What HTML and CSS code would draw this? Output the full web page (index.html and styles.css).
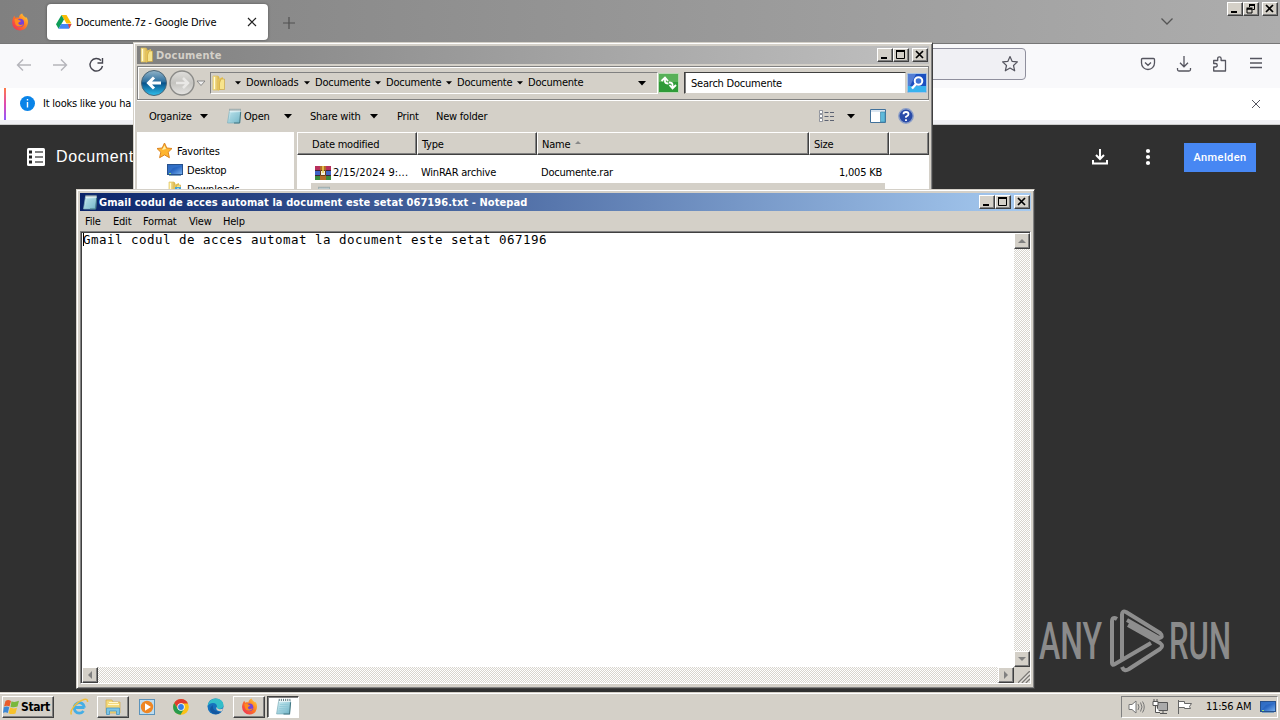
FILE: index.html
```html
<!DOCTYPE html>
<html lang="en">
<head>
<meta charset="UTF-8" />
<meta name="viewport" content="width=device-width, initial-scale=1" />
<title>Desktop</title>
<link rel="stylesheet" href="styles.css">
</head>
<body>
<svg width="0" height="0" class="defs">
  <defs>
    <linearGradient id="fox" x1="1" y1="0" x2="0" y2="1"><stop offset="0" stop-color="#ffdf3a"/><stop offset=".45" stop-color="#ff7a22"/><stop offset="1" stop-color="#ed2360"/></linearGradient>
    <linearGradient id="folder"><stop offset="0" stop-color="#fff3a8"/><stop offset="1" stop-color="#d8b04a"/></linearGradient>
    <linearGradient id="blueball" x1="0" y1="0" x2="0" y2="1"><stop offset="0" stop-color="#93b4c8"/><stop offset=".45" stop-color="#2c6f9f"/><stop offset=".5" stop-color="#07518a"/><stop offset="1" stop-color="#2fc0ed"/></linearGradient>
    <linearGradient id="grayball" x1="0" y1="0" x2="0" y2="1"><stop offset="0" stop-color="#e0dfdc"/><stop offset=".5" stop-color="#c4c3bf"/><stop offset="1" stop-color="#e6e5e3"/></linearGradient>
    <linearGradient id="pad" x1="0" y1="0" x2="1" y2="1"><stop offset="0" stop-color="#d9f3f8"/><stop offset="1" stop-color="#6bb1c4"/></linearGradient>
    <linearGradient id="scr" x1="0" y1="0" x2="1" y2="1"><stop offset="0" stop-color="#1d4fa3"/><stop offset=".5" stop-color="#2b69c4"/><stop offset="1" stop-color="#7db4ee"/></linearGradient>
  </defs>
  <symbol id="i-fox" viewBox="0 0 16 16">
    <path d="M8 15.500A7 7 0 0 1 1 8.500C1 6 2 4 3 2.500L4 4.500C5 4 6 4 7 4.300C7 2.500 8.500 1 10 .5C10.500 2.500 12 3 13 4L14 4C15 6 15.500 8 14.700 10.500A7 7 0 0 1 8 15.500z" fill="url(#fox)"/>
    <circle cx="8" cy="8.800" r="3.600" fill="#7543d9"/>
    <path d="M3 5.500C5 5 6.500 5.500 7.500 6.500L9 7C8 8 6.500 7.800 6.500 9.200C7 11 9.500 11 11 9.500C10 13 4.500 13 3.700 9z" fill="#ff8a1f"/>
  </symbol>
  <symbol id="i-folder" viewBox="0 0 16 16">
    <path d="M2 1h5l1 1v13H2z" fill="url(#folder)" stroke="#d9b951" stroke-width=".6"/>
    <path d="M7 4l5-2v12l-5 1.500z" fill="#e6c458"/>
    <path d="M10 4h3.500v10.500H8.500V8z" fill="#f7e48c" stroke="#c69f3a" stroke-width=".6"/>
    <path d="M3.500 2v12" stroke="#fffbd8"/>
  </symbol>
  <symbol id="i-pad" viewBox="0 0 16 16">
    <path d="M3.500 2.500h11l-1 12.500H1.500z" fill="url(#pad)" stroke="#7fb0bc" stroke-width=".7"/>
    <path d="M3.500 2.500h11" stroke="#f7fbfc" stroke-width="2"/>
    <path d="M4 .8v2M6 .8v2M8 .8v2M10 .8v2M12 .8v2M14 .8v2" stroke="#56747b" stroke-width=".9"/>
    <path d="M4.500 6h8M4.200 8h8M4 10h8M3.500 12h8" stroke="#8bc6d5" stroke-width=".7"/>
    <path d="M14.700 4l-1 11H8" fill="none" stroke="#407783"/>
  </symbol>
  <symbol id="i-screen" viewBox="0 0 16 14">
    <rect x=".5" y="1.500" width="15" height="10" fill="url(#scr)" stroke="#27518c"/>
    <path d="M1 10.500L6 5l9-2.500V2H1z" fill="#3d7ed4" opacity=".55"/>
    <path d="M2 12.500h12" stroke="#7ea0bd"/>
    <path d="M2 10.500h2" stroke="#9be26e"/>
  </symbol>
  <symbol id="i-down" viewBox="0 0 8 5"><path d="M0 0h8L4 4.500z"/></symbol>
  <symbol id="i-min" viewBox="0 0 12 10"><path d="M2 8h6" stroke="#000" stroke-width="2"/></symbol>
  <symbol id="i-max" viewBox="0 0 12 10"><path d="M1.500 1v7.500h8V1M1 1h9" fill="none" stroke="#000"/><path d="M1 1h9" stroke="#000" stroke-width="2"/></symbol>
  <symbol id="i-x" viewBox="0 0 12 10"><path d="M2 1l7 7M9 1L2 8" stroke="#000" stroke-width="1.700"/></symbol>
</svg>

<!-- Browser -->
<div class="browser">
  <div class="tabstrip">
    <svg class="fox" width="18" height="18"><use href="#i-fox"/></svg>
    <div class="tab">
      <svg width="16" height="14" viewBox="0 0 16 14">
        <path d="M5.500 0h5l5 8.500h-5z" fill="#fbbc04"/><path d="M5.500 0L0 9.300 2.600 13.700 8 4.500z" fill="#0f9d58"/><path d="M5.200 9h10.300l-2.500 4.700H2.600z" fill="#4285f4"/><path d="M12 9h3.500l-2.200 4.500z" fill="#ea4335"/>
      </svg>
      <span class="tab-title">Documente.7z - Google Drive</span>
      <svg width="10" height="10" viewBox="0 0 10 10"><path d="M1 1l8 8M9 1L1 9" stroke="#222" stroke-width="1.200"/></svg>
    </div>
    <svg class="plus" width="12" height="12" viewBox="0 0 12 12"><path d="M6 0v12M0 6h12" stroke="#505050" stroke-width="1.200"/></svg>
    <svg class="chev" width="14" height="9" viewBox="0 0 14 9"><path d="M1.500 1.500L7 7l5.500-5.500" fill="none" stroke="#555" stroke-width="1.300"/></svg>
    <div class="winbtns">
      <span class="btn3"><svg width="12" height="10"><use href="#i-min"/></svg></span>
      <span class="btn3"><svg width="12" height="10" viewBox="0 0 12 10"><path d="M4.500 3V1h5v4.500h-2M2 5h5v4H2z" fill="none" stroke="#000"/><path d="M4 1h6M1.500 4.500h6" stroke="#000" stroke-width="1.800"/></svg></span>
      <span class="btn3 gap"><svg width="12" height="10"><use href="#i-x"/></svg></span>
    </div>
  </div>
  <div class="navbar">
    <svg class="nav-arrows" width="90" height="20" viewBox="0 0 90 20" fill="none" stroke-width="1.400">
      <path d="M15 10H1.500M7 4.500L1.500 10 7 15.500M37 10h13.500M45 4.500l5.500 5.500-5.500 5.500" stroke="#b5b5bb"/>
      <path d="M85 5.500A6.300 6.300 0 1 0 86.500 11M86.500 3v5H81.500" stroke="#45454f"/>
    </svg>
    <div class="urlbar">
      <svg width="18" height="18" viewBox="0 0 18 18"><path d="M9 1.500l2.200 4.900 5.200.5-3.900 3.600 1.200 5.300L9 13.100l-4.700 2.700 1.200-5.300L1.600 6.900l5.200-.5z" fill="none" stroke="#55555f" stroke-width="1.200" stroke-linejoin="round"/></svg>
    </div>
    <div class="nav-icons">
      <svg width="16" height="16" viewBox="0 0 16 16" fill="none" stroke="#55555f" stroke-width="1.300"><path d="M2.500 2.500h11a1 1 0 0 1 1 1V7a6.500 6.500 0 0 1-13 0V3.500a1 1 0 0 1 1-1zM5 6.500l3 2.800 3-2.800"/></svg>
      <svg width="16" height="16" viewBox="0 0 16 16" fill="none" stroke="#55555f" stroke-width="1.300"><path d="M8 0v10.500M4 6.800l4 4 4-4M1.500 12v1.500a1.500 1.500 0 0 0 1.500 1.500h10a1.500 1.500 0 0 0 1.500-1.500V12"/></svg>
      <svg width="16" height="16" viewBox="0 0 16 16" fill="none" stroke="#55555f" stroke-width="1.300"><path d="M1.700 7.500V4.500h4V2.500a1.700 1.700 0 0 1 3.400 0v2h4.400V15H1.700v-4h1.800a1.700 1.700 0 0 0 0-3.500z" stroke-linejoin="round"/></svg>
      <svg width="16" height="16" viewBox="0 0 16 16" stroke="#55555f" stroke-width="1.300"><path d="M2 2.500h12M2 7h12M2 11.500h12"/></svg>
    </div>
  </div>
  <div class="notice">
    <svg width="15" height="15" viewBox="0 0 15 15"><circle cx="7.500" cy="7.500" r="7.500" fill="#0a84e8"/><path d="M7.500 3v1.600M7.500 6v5.500" stroke="#fff" stroke-width="1.400"/></svg>
    <span class="notice-text">It looks like you ha</span>
    <svg width="10" height="10" viewBox="0 0 10 10"><path d="M1 1l8 8M9 1L1 9" stroke="#55555f"/></svg>
  </div>
  <div class="drive">
    <svg width="18" height="18" viewBox="0 0 18 18"><rect width="18" height="18" rx="1.500" fill="#fff"/><path d="M2 4h3M2 9h3M2 14h3" stroke="#222" stroke-width="3"/><path d="M8 4h8M8 9h8M8 14h8" stroke="#555" stroke-width="1.400"/></svg>
    <span class="drive-title">Document</span>
    <svg class="dl" width="16" height="16" viewBox="0 0 16 16" fill="none" stroke="#fff" stroke-width="2"><path d="M8 0v9.500M4 6l4 4 4-4M1 11v3.500h14V11"/></svg>
    <svg width="6" height="18" viewBox="0 0 6 18" fill="#fff"><circle cx="3" cy="3" r="2.100"/><circle cx="3" cy="9" r="2.100"/><circle cx="3" cy="15" r="2.100"/></svg>
    <span class="signin">Anmelden</span>
  </div>
</div>

<!-- Watermark -->
<svg class="anyrun" width="210" height="70" viewBox="0 0 210 70">
  <g class="anyrun-text">
    <text x="1" y="51" textLength="63" lengthAdjust="spacingAndGlyphs">ANY</text>
    <text x="131" y="51" textLength="62" lengthAdjust="spacingAndGlyphs">RUN</text>
  </g>
  <path d="M84 53V6.500Q84 2.500 88 4L122 25Q126 29 121 30L89 12M79 11Q74 8 74 14V55Q74 58 77 56L113 35M84 59Q86 64 91 61L122 41Q126 38 122 35L90 17" fill="none" stroke="#8e8e8e" stroke-width="4" stroke-linejoin="round"/>
</svg>

<!-- Explorer -->
<div class="window explorer">
  <div class="titlebar inactive">
    <svg width="16" height="16"><use href="#i-folder"/></svg>
    <span class="title">Documente</span>
    <div class="winbtns">
      <span class="btn3"><svg width="12" height="10"><use href="#i-min"/></svg></span>
      <span class="btn3"><svg width="12" height="10"><use href="#i-max"/></svg></span>
      <span class="btn3 gap"><svg width="12" height="10"><use href="#i-x"/></svg></span>
    </div>
  </div>
  <div class="addressrow">
    <svg class="balls" width="68" height="28" viewBox="0 0 68 28">
      <circle cx="15" cy="14" r="12.500" fill="url(#blueball)" stroke="#4a6475"/>
      <path d="M22 14H10M15 8.500L9.500 14l5.500 5.500" fill="none" stroke="#fff" stroke-width="3"/>
      <circle cx="43" cy="14" r="12" fill="url(#grayball)" stroke="#8b8b88" stroke-width="1.400"/>
      <path d="M37 14h11M44 9l5 5-5 5" fill="none" stroke="#e9e8e6" stroke-width="2.500"/>
      <path d="M58 12h8l-4 4.500z" fill="#eee" stroke="#777" stroke-width=".8"/>
    </svg>
    <div class="address">
      <svg width="16" height="16"><use href="#i-folder"/></svg>
      <svg class="sep first" width="6" height="4"><use href="#i-down"/></svg>
      <span class="crumb downloads">Downloads</span>
      <svg class="sep" width="6" height="4"><use href="#i-down"/></svg>
      <span class="crumb">Documente</span>
      <svg class="sep" width="6" height="4"><use href="#i-down"/></svg>
      <span class="crumb">Documente</span>
      <svg class="sep" width="6" height="4"><use href="#i-down"/></svg>
      <span class="crumb">Documente</span>
      <svg class="sep" width="6" height="4"><use href="#i-down"/></svg>
      <span class="crumb">Documente</span>
      <svg class="address-drop" width="8" height="5"><use href="#i-down"/></svg>
    </div>
    <svg class="refresh" width="21" height="20" viewBox="0 0 21 20"><rect x=".5" y=".5" width="20" height="19" fill="#2f9b38" stroke="#b9d9b4"/><path d="M1 1h19v8H1z" fill="#6ab967" opacity=".7"/><path d="M7 5.500v3q0 2 3.500 2M3.500 8L7 4.500 10 8M14.500 14.500v-3q0-2-3.500-2M11.500 12l3 3.500 3.500-3.500" fill="none" stroke="#fff" stroke-width="1.800"/></svg>
    <div class="search">Search Documente</div>
    <svg width="20" height="20" viewBox="0 0 20 20"><rect x=".5" y=".5" width="19" height="19" rx="1" fill="#1b4fc0" stroke="#a6c4e4"/><path d="M1 13h18v6H1z" fill="#37b2ee"/><path d="M1 1h8L3 13H1z" fill="#6b92dd" opacity=".7"/><circle cx="11.500" cy="8" r="3.800" fill="#3d72d2" stroke="#fff" stroke-width="2"/><path d="M9 11l-4 4.500" stroke="#fff" stroke-width="2.400"/></svg>
  </div>
  <div class="commands">
    <span class="c-organize">Organize</span>
    <svg width="8" height="5"><use href="#i-down"/></svg>
    <svg class="c-pad" width="16" height="16"><use href="#i-pad"/></svg>
    <span class="c-open">Open</span>
    <svg width="8" height="5"><use href="#i-down"/></svg>
    <span class="c-share">Share with</span>
    <svg width="8" height="5"><use href="#i-down"/></svg>
    <span class="c-print">Print</span>
    <span class="c-new">New folder</span>
    <div class="views">
      <svg width="16" height="13" viewBox="0 0 16 13"><path d="M.5.5h3v3h-3zM.5 4.500h3v3h-3zM.5 8.500h3v3h-3z" fill="#fff" stroke="#7a7f8c" stroke-width=".8"/><path d="M5.500 2.500h4M11 2.500h4M5.500 6.500h4M11 6.500h4M5.500 10.500h4M11 10.500h4" stroke="#5c6272"/></svg>
      <svg width="8" height="5"><use href="#i-down"/></svg>
      <svg class="pane" width="16" height="14" viewBox="0 0 16 14"><path d="M.5.500h15v13H.5z" fill="#fff" stroke="#41719b"/><path d="M1 2h14" stroke="#b6cbe0"/><path d="M10.500 3h4.500v10h-4.500z" fill="#5eb9da" stroke="#418aaa" stroke-width=".7"/></svg>
      <svg width="16" height="16" viewBox="0 0 16 16"><circle cx="8" cy="8" r="7.200" fill="#294ba8" stroke="#8c9fc8" stroke-width="1.400"/><path d="M5.500 6.300Q5.500 4 8 4t2.500 2.200Q10.500 7.500 8 8.800v1M8 11.200v1.700" fill="none" stroke="#fff" stroke-width="1.800"/></svg>
    </div>
  </div>
  <div class="panes">
    <div class="sidebar">
      <div class="side-item top"><svg width="17" height="17" viewBox="0 0 17 17"><path d="M8.500 1l2.300 5 5.200.5-3.800 3.700 1.200 5.500-4.900-2.800-4.900 2.800 1.200-5.500L1 6.500 6.200 6z" fill="#ffb52e" stroke="#dc8421"/><path d="M8.500 3.500l1.500 3.500-4 1z" fill="#fff0a8"/></svg><span>Favorites</span></div>
      <div class="side-item sub"><svg width="16" height="14"><use href="#i-screen"/></svg><span>Desktop</span></div>
      <div class="side-item sub"><svg width="16" height="16" viewBox="0 0 16 16"><use href="#i-folder"/><path d="M8 6h6v7H8z" fill="#4aa3d2"/><path d="M11 7v4M9 9.500l2 2 2-2" stroke="#fff" fill="none"/></svg><span>Downloads</span></div>
    </div>
    <div class="filelist">
      <div class="header">
        <span class="h-date">Date modified</span><span class="h-type">Type</span><span class="h-name">Name <i class="sort"></i></span><span class="h-size">Size</span><span class="h-rest"></span>
      </div>
      <div class="file">
        <svg width="16" height="16" viewBox="0 0 16 16"><path d="M0 1h16v5H0z" fill="#b8305c"/><path d="M0 6h16v5H0z" fill="#3f65c8"/><path d="M0 11h16v4H0z" fill="#3a8b3c"/><path d="M0 5.500h16M0 10.500h16" stroke="#412233"/><path d="M5 1h6v14H5z" fill="#b46b28"/><path d="M5.500 5.500h5v5h-5z" fill="#f5efdc" stroke="#6b3f19"/><path d="M8 1v7" stroke="#eed34e" stroke-width="1.500"/></svg>
        <span class="f-date">2/15/2024 9:...</span><span class="f-type">WinRAR archive</span><span class="f-name">Documente.rar</span><span class="f-size">1,005 KB</span>
      </div>
      <div class="file selected"><svg width="16" height="16"><use href="#i-pad"/></svg></div>
    </div>
  </div>
</div>

<!-- Notepad -->
<div class="window notepad">
  <div class="titlebar active">
    <svg width="16" height="16"><use href="#i-pad"/></svg>
    <span class="title">Gmail codul de acces automat la document este setat 067196.txt - Notepad</span>
    <div class="winbtns">
      <span class="btn3"><svg width="12" height="10"><use href="#i-min"/></svg></span>
      <span class="btn3"><svg width="12" height="10"><use href="#i-max"/></svg></span>
      <span class="btn3 gap"><svg width="12" height="10"><use href="#i-x"/></svg></span>
    </div>
  </div>
  <div class="menu"><span class="m-file">File</span><span class="m-edit">Edit</span><span class="m-format">Format</span><span class="m-view">View</span><span>Help</span></div>
  <div class="editor">
    <div class="text">Gmail codul de acces automat la document este setat 067196</div>
    <div class="vscroll"><span class="btn3"><i class="up"></i></span><span class="btn3"><i class="dn"></i></span></div>
    <div class="hscroll"><span class="btn3"><i class="lt"></i></span><span class="btn3"><i class="rt"></i></span></div>
    <div class="grip"><svg width="12" height="12" viewBox="0 0 12 12"><path d="M0 12L12 0M4 12l8-8M8 12l4-4" stroke="#7c7a76" stroke-width="1.500"/><path d="M1.500 12L12 1.500M5.500 12L12 5.500M9.500 12L12 9.500" stroke="#fff" stroke-width=".7"/></svg></div>
  </div>
</div>

<!-- Taskbar -->
<div class="taskbar">
  <div class="start">
    <svg width="17" height="16" viewBox="0 0 17 16"><path d="M2.500 2Q5 0 8 2L6.500 7.500Q4 6 1 7.500z" fill="#e95b2b"/><path d="M8.500 2.300q3 1.500 7.500-.5L14.500 7.500q-4 1.500-7 .2z" fill="#79b83c"/><path d="M.8 8.300Q4 6.800 6.200 8.300L4.800 14Q2 12.500 0 14z" fill="#3d88d5"/><path d="M7.200 8.600q3 1.500 6.800.2L12.500 14.500q-4 1.300-7-.3z" fill="#f6c22d"/></svg>
    <span>Start</span>
  </div>
  <div class="task ie"><svg width="19" height="18" viewBox="0 0 19 18"><path d="M14.500 9.500H5.200M14.500 9.500A5.200 5.200 0 1 0 13.500 13" fill="none" stroke="#45aee5" stroke-width="2.800"/><path d="M1.500 16.500C-1 13 6 4 14 1.500Q18 .5 17.500 4" fill="none" stroke="#f0bd39" stroke-width="1.500"/></svg></div>
  <div class="task raised"><svg width="18" height="18" viewBox="0 0 18 18"><path d="M2 2h6l1 2h7v11H2z" fill="#f3d97b" stroke="#d1ab48" stroke-width=".7"/><path d="M5 4.500h9M4 6.500h11" stroke="#fff8d0"/><path d="M2.500 16.500V10h13v6.500h-3V13h-7v3.500z" fill="#7bc5e6" stroke="#4795c3" stroke-width=".8"/></svg></div>
  <div class="task"><svg width="16" height="16" viewBox="0 0 16 16"><rect x=".5" y=".5" width="15" height="15" fill="#bddcf0" stroke="#5b93bb"/><circle cx="8" cy="8" r="6.200" fill="#ef8623"/><path d="M6 4.300v7.400L12 8z" fill="#fff"/></svg></div>
  <div class="task"><svg width="16" height="16" viewBox="0 0 16 16"><circle cx="8" cy="8" r="7.800" fill="#fbc116"/><path d="M1.200 4A7.800 7.800 0 0 1 15 4.500H8L5 9.500z" fill="#df3b2f"/><path d="M1.200 4A7.800 7.800 0 0 0 7.500 15.800L11 10H5z" fill="#279b4d"/><circle cx="8" cy="8" r="3.700" fill="#fff"/><circle cx="8" cy="8" r="2.900" fill="#357fe5"/></svg></div>
  <div class="task"><svg width="17" height="17" viewBox="0 0 17 17"><circle cx="8.500" cy="8.500" r="8" fill="#1671bd"/><path d="M.6 8Q2 .5 9 .5 16 1 16.500 7q0 4-5 4-2.500-.3-1.500-2Q10 5 6 5 2.500 5 .6 8z" fill="#32bdc9"/><path d="M9.500 9Q8 13 14.500 13.500 16 12 16 10.500 11 12.500 9.500 9z" fill="#d4d0c8"/><path d="M6 7Q4.500 13 13.500 14.500 9 18 4.500 14.500 1 10 6 7z" fill="#1457a0"/></svg></div>
  <div class="task raised"><svg width="17" height="17"><use href="#i-fox"/></svg></div>
  <div class="task pressed"><svg width="17" height="17"><use href="#i-pad"/></svg></div>
  <div class="tray">
    <svg width="17" height="16" viewBox="0 0 17 16" fill="none" stroke="#777"><path d="M1 5.500h3L8 2v12l-4-3.500H1z" fill="#fff"/><path d="M10 5q2 3 0 6M12.500 3.500q3 4.500 0 9M14.500 2.500q3.500 5.500 0 11"/></svg>
    <svg width="17" height="16" viewBox="0 0 17 16" fill="none" stroke="#555"><path d="M5.500 3.500h10v8h-10zM8 14.500h7M11 12v2" fill="#aaa"/><path d="M1 2.500h5v4H1zM2 0v2M5 0v2M3.500 7v6.500H8" fill="#fff"/></svg>
    <svg width="17" height="16" viewBox="0 0 17 16" fill="#fff" stroke="#666"><path d="M2.500 1v14M2.500 2.500h6v2h7l-2 3 1 2h-6v-1h-6z"/></svg>
    <span class="clock">11:56 AM</span>
    <svg width="16" height="14"><use href="#i-screen"/></svg>
  </div>
</div>
</body>
</html>
```

FILE: styles.css
```css
* {
  box-sizing: border-box;
}
body {
  margin: 0;
  width: 1280px;
  height: 720px;
  overflow: hidden;
  position: relative;
  background: #303030;
  font-family: "DejaVu Sans Condensed", "DejaVu Sans", sans-serif;
  font-stretch: condensed;
  font-size: 11px;
  letter-spacing: -0.22px;
  line-height: 14px;
  color: #000;
  white-space: nowrap;
}
svg {
  display: block;
  flex: none;
}
.defs {
  position: absolute;
}

/* classic 3d button */
.btn3 {
  width: 16px;
  height: 14px;
  background: #d4d0c8;
  border: 1px solid;
  border-color: #fff #404040 #404040 #fff;
  box-shadow: inset -1px -1px #808080;
  display: flex;
  align-items: center;
  justify-content: center;
  flex: none;
}
.btn3.gap {
  margin-left: 3px;
}
.winbtns {
  display: flex;
  margin-left: auto;
}

/* browser */
.tabstrip {
  height: 44px;
  display: flex;
  align-items: flex-start;
  background: linear-gradient(90deg, #808080, #adadad);
  border-bottom: 1px solid #777;
}
.fox {
  margin: 13px 0 0 11px;
}
.tab {
  width: 221px;
  height: 36px;
  margin: 4px 0 0 18px;
  padding: 0 11px 0 9px;
  display: flex;
  align-items: center;
  background: #fff;
  border-radius: 4px;
  box-shadow: 0 0 3px rgba(0,0,0,0.4);
}
.tab-title {
  margin-left: 4px;
  padding-top: 2px;
  flex: 1;
}
.plus {
  margin: 17px 0 0 15px;
}
.chev {
  margin: 17px 0 0 865px;
}
.tabstrip .winbtns {
  margin-top: 2px;
  margin-right: 2px;
}
.navbar {
  height: 44px;
  display: flex;
  align-items: center;
  background: #f9f9fb;
}
.nav-arrows {
  margin-left: 16px;
  margin-top: -2px;
}
.urlbar {
  width: 886px;
  height: 32px;
  margin-left: 34px;
  margin-top: -4px;
  padding-right: 6px;
  display: flex;
  align-items: center;
  justify-content: flex-end;
  background: #f0f0f4;
  border: 1px solid #8f8f9d;
  border-radius: 4px;
}
.nav-icons {
  display: flex;
  gap: 20px;
  margin-left: 114px;
  margin-top: -4px;
}
.notice {
  height: 37px;
  display: flex;
  align-items: center;
  padding: 0 19px 5px 20px;
  background: linear-gradient(#ff7a45, #e04ab0, #9059ff) 4px 0 / 2px 32px no-repeat, #fff;
  border-bottom: 1px solid #ccc;
  box-shadow: inset 0 -4px #f0f0f4;
}
.notice-text {
  margin-left: 8px;
  flex: 1;
}
.drive {
  height: 64px;
  padding: 0 24px 0 27px;
  display: flex;
  align-items: center;
}
.drive-title {
  margin-left: 11px;
  width: 90px;
  font: 16px "Liberation Sans", sans-serif;
  letter-spacing: 0.6px;
  color: #fff;
}
.dl {
  margin-left: auto;
}
.dl + svg {
  margin: 0 33px 0 37px;
}
.signin {
  width: 72px;
  height: 29px;
  background: #4787f3;
  color: #fff;
  font: 500 11px/29px "Roboto", sans-serif;
  letter-spacing: 0.4px;
  text-align: center;
}

.anyrun {
  position: absolute;
  left: 1038px;
  top: 608px;
}
.anyrun-text {
  font: 500 51px "Roboto", sans-serif;
  letter-spacing: 0;
  fill: #8b8b8b;
}

/* windows */
.window {
  position: absolute;
  background: #d4d0c8;
  border: 1px solid;
  border-color: #d4d0c8 #404040 #404040 #d4d0c8;
  box-shadow: inset 1px 1px #fff, inset -1px -1px #808080;
  padding: 3px;
}
.titlebar {
  height: 18px;
  padding: 0 1px 0 2px;
  display: flex;
  align-items: center;
  font-weight: bold;
  letter-spacing: 0.08px;
}
.titlebar .title {
  margin-left: 1px;
  padding-top: 1px;
}
.inactive {
  background: linear-gradient(90deg, #808080, #c0c0c0);
  color: #d4d0c8;
}
.inactive .title {
  letter-spacing: 0.25px;
}
.active {
  background: linear-gradient(90deg, #0a246a, #a6caf0);
  color: #fff;
}

.explorer {
  left: 133px;
  top: 42px;
  width: 800px;
  height: 160px;
}
.addressrow {
  height: 34px;
  margin-top: 2px;
  display: flex;
  align-items: center;
  padding-left: 1px;
  border: 1px solid #808080;
  box-shadow: inset 1px 1px #fff, 0 1px #fff;
}
.address {
  width: 448px;
  height: 22px;
  margin-left: 3px;
  display: flex;
  align-items: center;
  border: 1px solid;
  border-color: #808080 #fff #fff #808080;
}
.sep.first {
  margin-left: 8px;
}
.sep {
  margin-right: 5px;
}
.crumb {
  width: 60px;
}
.crumb.downloads {
  width: 58px;
}
.address-drop {
  margin-left: auto;
  margin-right: 11px;
}
.search {
  width: 222px;
  height: 22px;
  margin: 0 1px 0 5px;
  padding: 4px 6px;
  background: #fff;
  border: 1px solid;
  border-color: #404040 #d4d0c8 #d4d0c8 #404040;
  box-shadow: inset 1px 0 #808080;
}
.commands {
  height: 32px;
  display: flex;
  align-items: center;
  padding-left: 12px;
}
.commands span {
  padding-top: 1px;
}
.c-organize {
  width: 51px;
}
.c-pad {
  margin: 0 2px 0 18px;
}
.c-open {
  width: 40px;
}
.c-share {
  width: 60px;
  margin-left: 18px;
}
.c-print {
  width: 39px;
  margin-left: 19px;
}
.views {
  display: flex;
  align-items: center;
  gap: 12px;
  margin-left: auto;
  margin-right: 15px;
}
.pane {
  margin-left: 3px;
}
.panes {
  height: 64px;
  display: flex;
  background: #fff;
  overflow: hidden;
}
.sidebar {
  width: 157px;
  padding-top: 9px;
}
.side-item {
  height: 19px;
  display: flex;
  align-items: center;
}
.side-item span {
  padding-top: 2px;
}
.side-item.top {
  padding-left: 19px;
  gap: 4px;
}
.side-item.sub {
  padding-left: 30px;
  gap: 4px;
}
.filelist {
  flex: 1;
  border-left: 3px solid #d4d0c8;
}
.header {
  height: 23px;
  display: flex;
  background: #d4d0c8;
}
.header span {
  padding: 5px 0 0 4px;
  border-top: 1px solid #fff;
  border-left: 1px solid #fff;
  border-right: 1px solid #404040;
  border-bottom: 1px solid #404040;
  box-shadow: inset -1px -1px #808080;
}
.header .h-date {
  width: 120px;
  padding-left: 14px;
}
.header .h-type {
  width: 120px;
}
.header .h-name {
  width: 272px;
}
.header .h-size {
  width: 80px;
}
.header .h-rest {
  flex: 1;
}
.sort {
  display: inline-block;
  border: 3px solid transparent;
  border-top: 0;
  border-bottom-color: #888;
  margin: 0 0 4px 2px;
}
.file {
  height: 22px;
  margin: 7px 44px 0 14px;
  padding-left: 4px;
  display: flex;
  align-items: center;
}
.file.selected {
  margin-top: -1px;
  background: #d4d0c8;
}
.f-date {
  width: 90px;
  padding-left: 2px;
  letter-spacing: 0.15px;
}
.f-type {
  width: 120px;
}
.f-size {
  margin-left: auto;
  margin-right: 3px;
}

.notepad {
  left: 76px;
  top: 189px;
  width: 959px;
  height: 500px;
}
.menu {
  height: 20px;
  display: flex;
  align-items: center;
  padding: 2px 0 0 5px;
}
.m-file {
  width: 28px;
}
.m-edit {
  width: 30px;
}
.m-format {
  width: 46px;
}
.m-view {
  width: 34px;
}
.editor {
  height: 453px;
  display: grid;
  grid-template-columns: 1fr 16px;
  grid-template-rows: 1fr 16px;
  border: 1px solid;
  border-color: #808080 #fff #fff #808080;
  box-shadow: inset 1px 1px #404040;
  padding: 1px 0 0 1px;
}
.text {
  background: #fff;
  font: 12.5px/14px "DejaVu Sans Mono", monospace;
  font-stretch: normal;
  letter-spacing: 0.475px;
  border-left: 1px solid #fff;
}
.text::before {
  content: "";
  display: inline-block;
  width: 1px;
  height: 13px;
  margin-right: -1px;
  background: #000;
  vertical-align: top;
}
.vscroll,
.hscroll {
  display: flex;
  justify-content: space-between;
  background: repeating-conic-gradient(#fff 0 25%, #d8d5ce 0 50%) 0 0 / 2px 2px;
}
.vscroll {
  flex-direction: column;
}
.vscroll .btn3,
.hscroll .btn3 {
  width: 16px;
  height: 16px;
}
.btn3 i {
  border: 4px solid transparent;
}
.btn3 .up {
  border-top: 0;
  border-bottom-color: #808080;
}
.btn3 .dn {
  border-bottom: 0;
  border-top-color: #808080;
}
.btn3 .lt {
  border-left: 0;
  border-right-color: #808080;
}
.btn3 .rt {
  border-right: 0;
  border-left-color: #808080;
}
.grip {
  display: flex;
  align-items: flex-end;
  justify-content: flex-end;
}

/* taskbar */
.taskbar {
  position: absolute;
  left: 0;
  top: 692px;
  width: 1280px;
  height: 28px;
  padding: 3px 2px 2px;
  display: flex;
  align-items: center;
  background: #d4d0c8;
  box-shadow: inset 0 1px #d4d0c8, inset 0 2px #fff;
}
.start {
  width: 52px;
  height: 22px;
  display: flex;
  align-items: center;
  gap: 1px;
  margin-right: 9px;
  font-size: 12px;
  font-weight: bold;
  letter-spacing: -0.4px;
}
.start,
.raised {
  border: 1px solid;
  border-color: #fff #404040 #404040 #fff;
  box-shadow: inset -1px -1px #808080;
}
.task {
  width: 32px;
  height: 22px;
  margin-right: 2px;
  display: flex;
  align-items: center;
  justify-content: center;
}
.pressed {
  background: #fff;
  border: 1px solid;
  border-color: #404040 #fff #fff #404040;
  box-shadow: inset 1px 1px #808080;
}
.tray {
  width: 157px;
  height: 22px;
  margin-left: auto;
  padding: 0 1px 0 6px;
  display: flex;
  align-items: center;
  gap: 7px;
  border: 1px solid;
  border-color: #808080 #fff #fff #808080;
}
.clock {
  margin-left: 6px;
  width: 47px;
  padding-top: 1px;
}
```
